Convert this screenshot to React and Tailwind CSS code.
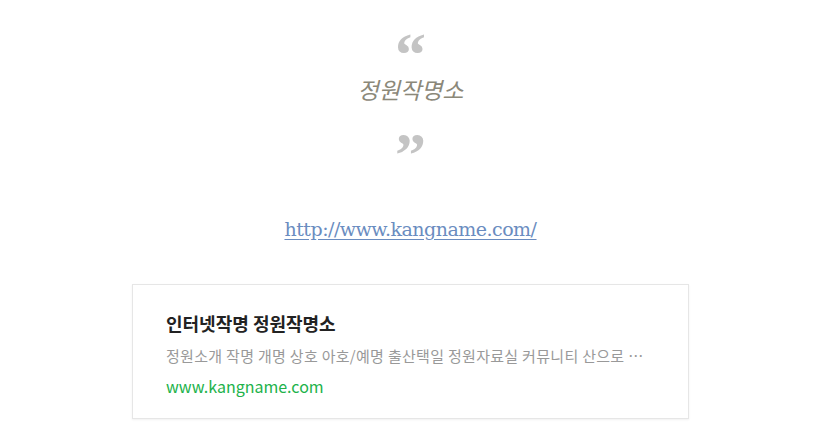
export default function App() {
  return (
    <div className="w-[821px] min-h-[444px] bg-white">
      <div className="flex flex-col items-center">
        <div className="mt-[23px] text-[62px] leading-none text-[#c4c4c4] font-bold font-['Liberation_Serif',serif]">“</div>
        <div className="mt-[-11px] text-[23px] leading-[30px] italic text-[#8b8879] font-['Noto_Sans_CJK_KR',sans-serif]">정원작명소</div>
        <div className="mt-[19px] text-[62px] leading-none text-[#c4c4c4] font-bold font-['Liberation_Serif',serif]">”</div>
        <a href="#" className="mt-[30px] text-[19px] leading-[28px] text-[#6a8cc0] underline underline-offset-[3px] font-['DejaVu_Serif',serif] tracking-[-0.5px]">http://www.kangname.com/</a>
        <div className="mt-[41px] w-[557px] h-[135px] border border-[#e6e6e6] shadow-[0_1px_2px_rgba(0,0,0,0.06)] px-[33px] pt-[25px] font-['Noto_Sans_CJK_KR',sans-serif]">
          <div className="text-[18px] leading-[26px] font-bold text-[#222]">인터넷작명 정원작명소</div>
          <div className="mt-[9px] text-[15px] leading-[22px] text-[#999] tracking-[0.3px] truncate">정원소개 작명 개명 상호 아호/예명 출산택일 정원자료실 커뮤니티 산으로 가는 길</div>
          <div className="mt-[8px] text-[16px] leading-[22px] text-[#21b24a]">www.kangname.com</div>
        </div>
      </div>
    </div>
  )
}
